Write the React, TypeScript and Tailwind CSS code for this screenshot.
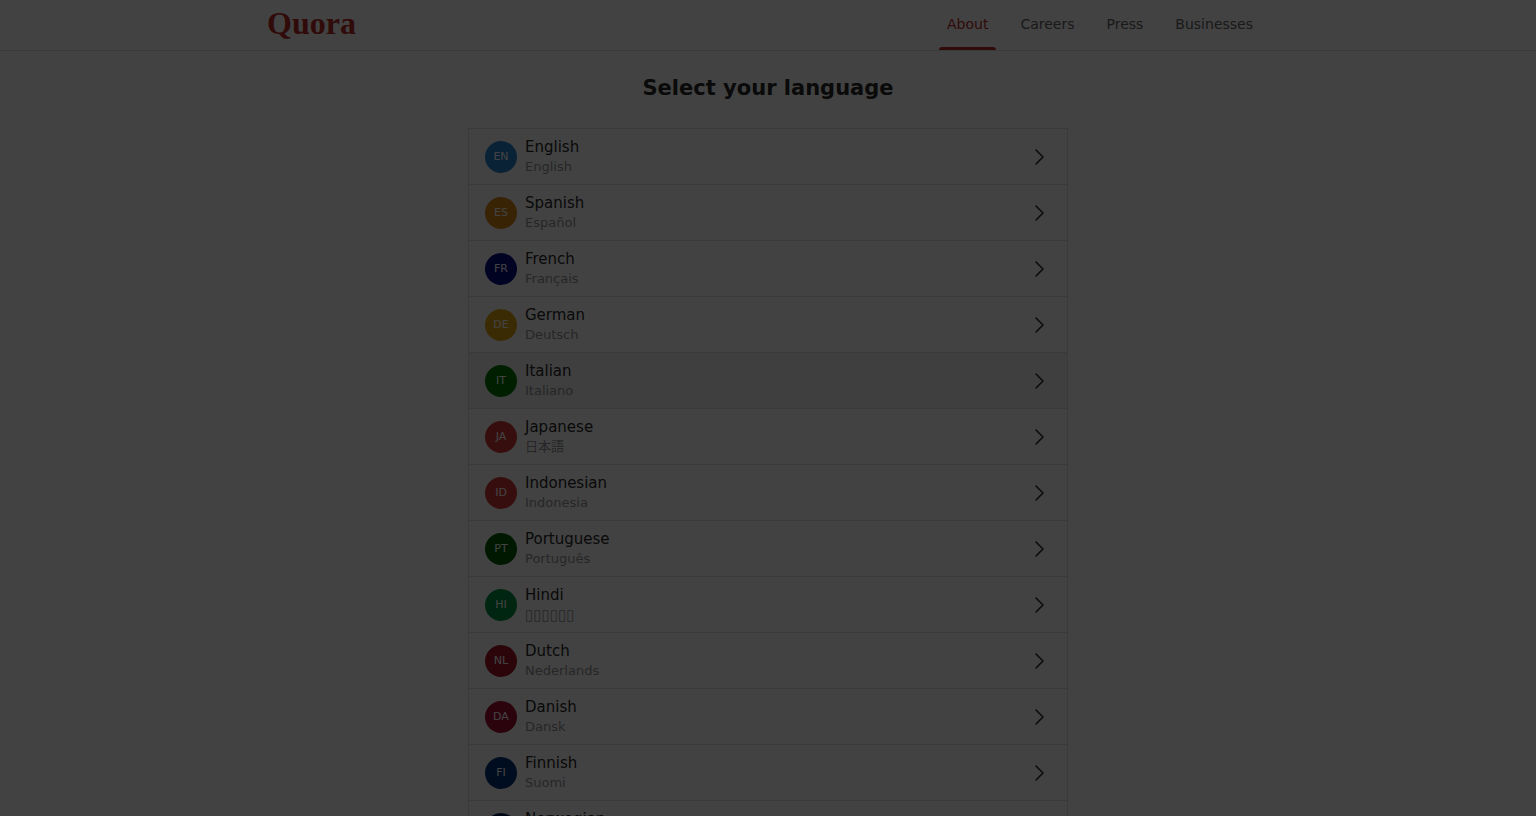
import clsx from 'clsx';

const NAV = ['About', 'Careers', 'Press', 'Businesses'];

const LANGUAGES = [
    { code: 'EN', name: 'English', native: 'English', color: 'bg-[#2684d0]' },
    { code: 'ES', name: 'Spanish', native: 'Español', color: 'bg-[#db8615]' },
    { code: 'FR', name: 'French', native: 'Français', color: 'bg-[#000c85]' },
    { code: 'DE', name: 'German', native: 'Deutsch', color: 'bg-[#e5a812]' },
    { code: 'IT', name: 'Italian', native: 'Italiano', color: 'bg-[#007a00]', active: true },
    { code: 'JA', name: 'Japanese', native: '日本語', color: 'bg-[#d53638]' },
    { code: 'ID', name: 'Indonesian', native: 'Indonesia', color: 'bg-[#d53638]' },
    { code: 'PT', name: 'Portuguese', native: 'Português', color: 'bg-[#005c00]' },
    { code: 'HI', name: 'Hindi', native: '▯▯▯▯▯▯', color: 'bg-[#009246]', boxes: true },
    { code: 'NL', name: 'Dutch', native: 'Nederlands', color: 'bg-[#a51525]' },
    { code: 'DA', name: 'Danish', native: 'Dansk', color: 'bg-[#a80c34]' },
    { code: 'FI', name: 'Finnish', native: 'Suomi', color: 'bg-[#003078]' },
    { code: 'NO', name: 'Norwegian', native: 'Norsk', color: 'bg-[#00205b]' },
];

function Chevron() {
    return (
        <svg className="w-6 h-6 shrink-0 text-[#282829]" viewBox="0 0 24 24" fill="none" stroke="currentColor" aria-hidden="true">
            <path strokeLinecap="round" strokeLinejoin="round" strokeWidth={1.5} d="M9 5l7 7-7 7" />
        </svg>
    );
}

function Header() {
    return (
        <header className="border-b border-[#dee0e1]">
            <div className="max-w-[1002px] h-[50px] mx-auto flex items-center justify-between">
                <a href="#home" className="pb-1 font-['Liberation_Serif',serif] text-[32px] leading-none font-bold text-[#b92b27]">
                    Quora
                </a>
                <nav className="h-full flex gap-4 px-2">
                    {NAV.map((item, i) => (
                        <a
                            key={item}
                            href={`#${item.toLowerCase()}`}
                            className={clsx('flex flex-col justify-between px-2 pt-3 text-sm leading-6', i === 0 ? 'text-[#b92b27]' : 'text-[#636466]')}
                        >
                            {item}
                            {i === 0 && <span className="-mx-2 h-[3px] rounded-t-sm bg-[#b92b27]"></span>}
                        </a>
                    ))}
                </nav>
            </div>
        </header>
    );
}

export default function App() {
    return (
        <div className="h-screen overflow-hidden bg-white font-['DejaVu_Sans','Noto_Sans_CJK_JP',sans-serif]">
            <Header />
            <main className="max-w-[600px] mx-auto pt-6">
                <h1 className="text-[21px] leading-[26px] font-bold text-center text-[#282829]">Select your language</h1>
                <ul className="mt-[27px] border border-[#dee0e1]">
                    {LANGUAGES.map((lang) => (
                        <li key={lang.code} className="border-b border-[#dee0e1] last:border-b-0">
                            <a
                                href={`#${lang.code.toLowerCase()}`}
                                className={clsx('flex items-center gap-2 px-4 py-2 hover:bg-[#f1f1f2]', lang.active && 'bg-[#f1f1f2]')}
                            >
                                <span className={clsx('w-8 h-8 shrink-0 rounded-full flex items-center justify-center text-[11px] leading-4 text-white', lang.color)}>
                                    {lang.code}
                                </span>
                                <span className="flex-1">
                                    <span className="block text-[15px] leading-[21px] text-[#282829]">{lang.name}</span>
                                    <span className={clsx('block leading-[18px] text-[#939598]', lang.boxes ? 'text-[15px]' : 'text-[13px]')}>
                                        {lang.native}
                                    </span>
                                </span>
                                <Chevron />
                            </a>
                        </li>
                    ))}
                </ul>
            </main>
            {/* page dimmer */}
            <div className="fixed inset-0 bg-black/74"></div>
        </div>
    );
}
